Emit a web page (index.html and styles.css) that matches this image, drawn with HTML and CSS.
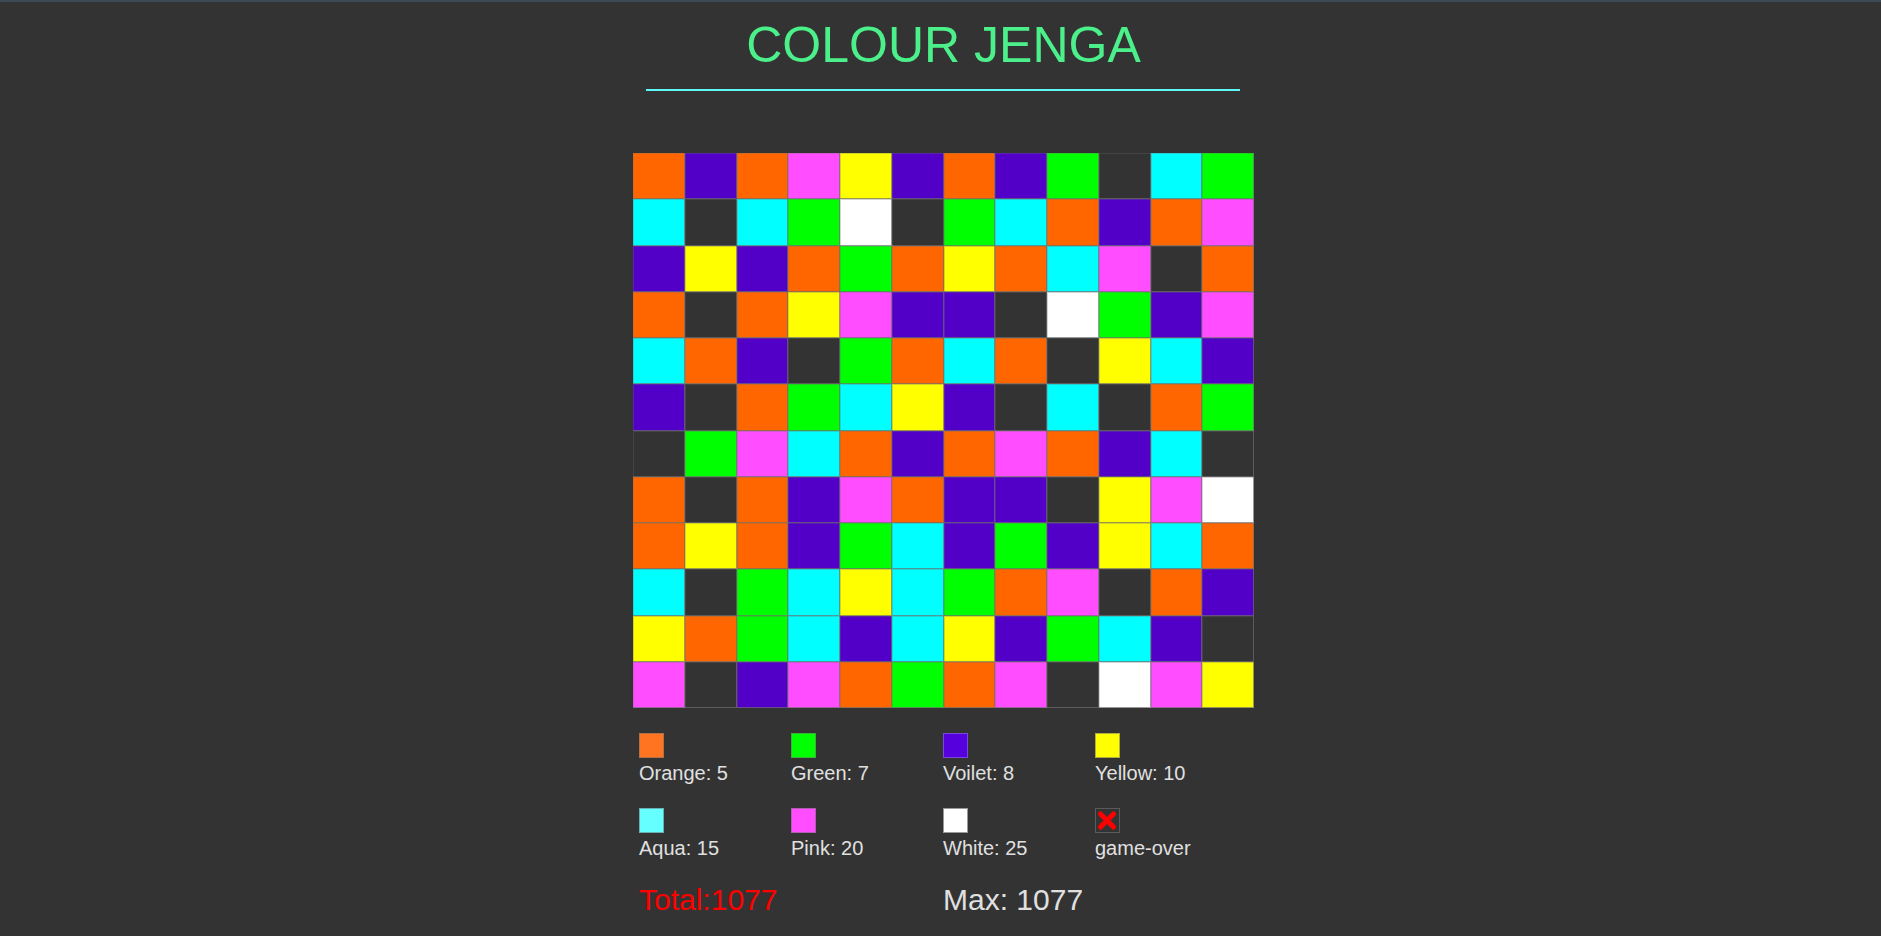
FILE: index.html
```html
<!DOCTYPE html>
<html lang="en">
<head>
<meta charset="utf-8">
<title>Colour Jenga</title>
<link rel="stylesheet" href="styles.css">
</head>
<body>
<div class="wrap">
  <h1 class="title">COLOUR JENGA</h1>
  <hr class="rule">
  <div class="board" id="board"></div>
  <div class="legend">
    <div class="item"><span class="sq c-orange"></span><span class="lbl">Orange: 5</span></div>
    <div class="item"><span class="sq c-green"></span><span class="lbl">Green: 7</span></div>
    <div class="item"><span class="sq c-violet"></span><span class="lbl">Voilet: 8</span></div>
    <div class="item"><span class="sq c-yellow"></span><span class="lbl">Yellow: 10</span></div>
    <div class="item"><span class="sq c-aqua"></span><span class="lbl">Aqua: 15</span></div>
    <div class="item"><span class="sq c-pink"></span><span class="lbl">Pink: 20</span></div>
    <div class="item"><span class="sq c-white"></span><span class="lbl">White: 25</span></div>
    <div class="item"><span class="sq c-over"><svg viewBox="0 0 23 23" width="23" height="23"><path d="M4.5 5 L17.5 18 M17.5 5 L4.5 18" stroke="#ff0000" stroke-width="5" stroke-linecap="round" fill="none"/></svg></span><span class="lbl">game-over</span></div>
    <div class="total">Total:1077</div>
    <div class="max">Max: 1077</div>
  </div>
</div>
<script>
var rows = [
"o v o p y v o v g d a g",
"a d a g w d g a o v o p",
"v y v o g o y o a p d o",
"o d o y p v v d w g v p",
"a o v d g o a o d y a v",
"v d o g a y v d a d o g",
"d g p a o v o p o v a d",
"o d o v p o v v d y p w",
"o y o v g a v g v y a o",
"a d g a y a g o p d o v",
"y o g a v a y v g a v d",
"p d v p o g o p d w p y"
];
var names = {o:"orange",v:"violet",p:"pink",y:"yellow",g:"green",a:"aqua",w:"white",d:"empty"};
var board = document.getElementById("board");
rows.forEach(function(r){
  r.split(" ").forEach(function(k){
    var c = document.createElement("div");
    c.className = "cell b-" + names[k];
    board.appendChild(c);
  });
});
</script>
</body>
</html>
```

FILE: styles.css
```css
html, body {
  margin: 0;
  padding: 0;
  background: #333333;
}
body {
  border-top: 2px solid #3c4a55;
  min-height: 934px;
  font-family: "Liberation Sans", Arial, sans-serif;
  color: #e0e0e0;
}
.wrap {
  width: 621px;
  margin-left: calc(50% - 307.5px);
}
.title {
  margin: 15px 0 0 0;
  font-size: 50px;
  line-height: 57px;
  font-weight: normal;
  text-align: center;
  color: #4cf08a;
}
.rule {
  margin: 15px 14px 0 13px;
  border: 0;
  height: 2px;
  background: #5ff8f8;
}
.board {
  margin-top: 62px;
  width: 621px;
  height: 555px;
  display: grid;
  grid-template-columns: repeat(12, 1fr);
  grid-template-rows: repeat(12, 1fr);
  box-shadow: inset 1px 1px 0 rgba(110, 110, 110, 0.7);
}
.cell {
  box-shadow: inset -1px -1px 0 rgba(110, 110, 110, 0.7), inset 1px 1px 0 rgba(110, 110, 110, 0.3);
}
.b-orange { background: #ff6600; }
.b-violet { background: #5200c8; }
.b-pink { background: #ff4dff; }
.b-yellow { background: #ffff00; }
.b-green { background: #00ff00; }
.b-aqua { background: #00ffff; }
.b-white { background: #ffffff; }
.b-empty { background: #333333; }

.legend {
  margin-top: 25px;
  padding-left: 6px;
  display: grid;
  grid-template-columns: repeat(4, 152px);
  row-gap: 23px;
}
.item {
  display: flex;
  flex-direction: column;
  align-items: flex-start;
  gap: 4px;
}
.sq {
  box-sizing: border-box;
  width: 25px;
  height: 25px;
  border: 1px solid rgba(110, 110, 110, 0.55);
  display: flex;
  align-items: center;
  justify-content: center;
}
.lbl {
  font-size: 20px;
  line-height: 23px;
}
.c-orange { background: #ff7420; }
.c-green { background: #00ff00; }
.c-violet { background: #5500dd; border-color: #7a48dc; }
.c-yellow { background: #ffff00; }
.c-aqua { background: #66ffff; }
.c-pink { background: #ff4dff; }
.c-white { background: #ffffff; border-color: #999999; }
.c-over { background: transparent; border-color: #5a5a5a; }
.total, .max {
  grid-column: span 2;
  font-size: 30px;
  line-height: 34px;
}
.total { color: #ff0000; }
.max { color: #e0e0e0; }
```
